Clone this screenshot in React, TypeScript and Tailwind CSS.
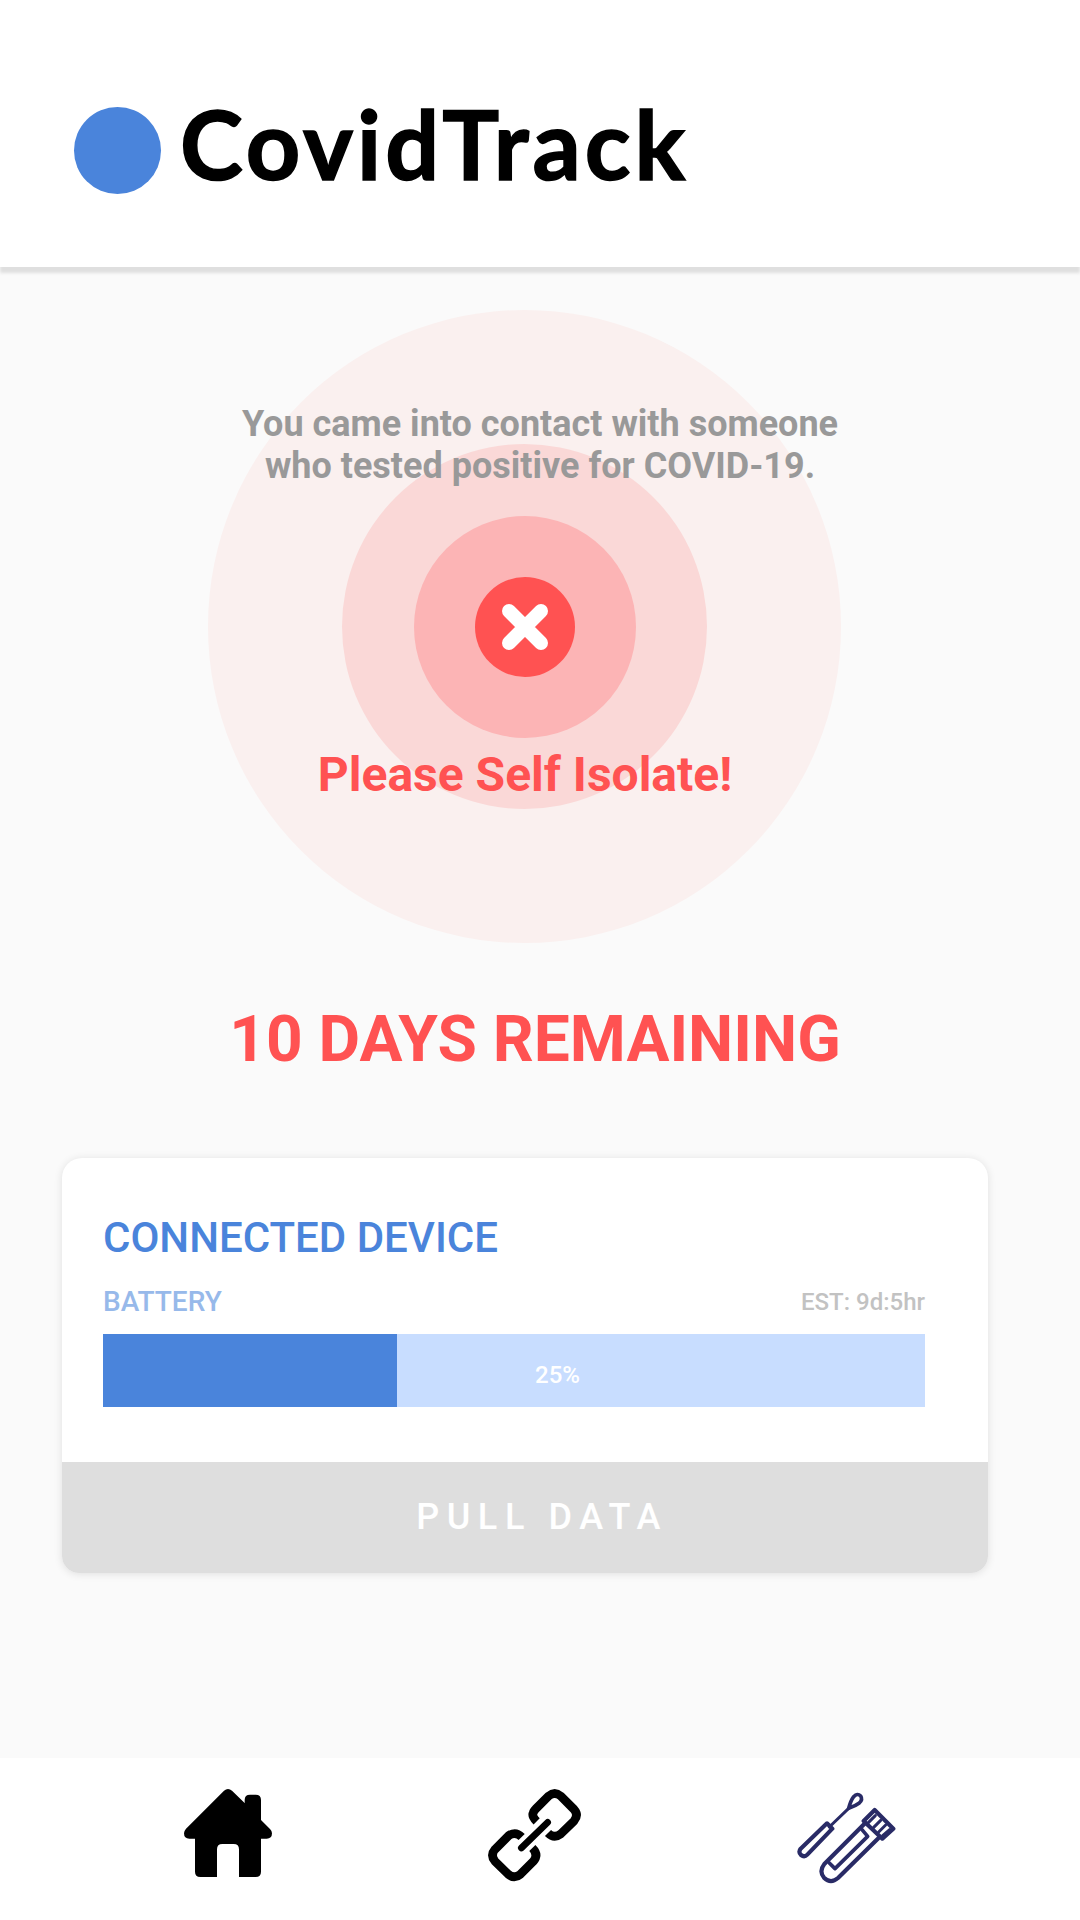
import React from "react";

const BATTERY_FILL = 294;

function HomeIcon() {
  return (
    <svg className="h-[88px] w-[88px]" viewBox="42 116 264 264" fill="#000">
      <path d="M162 121Q174 111 186 121L224 158V149Q224 133 240 133H257Q273 133 273 149V209L300 236Q306 242 306 249Q306 265 290 265H273V364Q273 380 257 380H207V297Q207 281 191 281H157Q141 281 141 297V380H91Q75 380 75 364V265H58Q42 265 42 249Q42 242 48 235Z" />
    </svg>
  );
}

function LinkIcon() {
  return (
    <svg className="h-[93px] w-[93px]" viewBox="54 116 279 279" fill="none" stroke="#000" strokeWidth="26">
      <path d="M200 213Q184 197 190 187Q190 183 198 175L236 137Q254 122 272 137L312 177Q327 194 312 212L272 251Q252 266 234 248" />
      <path d="M155 260Q137 242 116 256L75 297Q60 315 75 333L115 372Q133 387 151 372L190 333Q207 313 187 293" />
      <path d="M154 293L233 216" strokeWidth="20" strokeLinecap="round" />
    </svg>
  );
}

function SwabIcon() {
  return (
    <svg
      className="h-[92px] w-[99px]"
      viewBox="52 68 297 276"
      fill="none"
      stroke="#292b66"
      strokeWidth="12.5"
      strokeLinejoin="round"
      strokeLinecap="round"
    >
      <path d="M149 173L207 117" strokeWidth="9" />
      <path d="M207 117Q213 94 222 82Q233 70 243 80Q250 91 239 101Q227 110 207 117Z" strokeWidth="11" />
      <path d="M142 162L158 178L83 256Q74 265 64 257Q55 248 63 238Z" />
      <path d="M285 122L341 178L308 208L252 155Z" />
      <path d="M287 139L266 160M303 153L282 174M318 167L297 188M330 181L309 199" strokeWidth="9" />
      <path d="M256 162L134 284Q117 306 133 325Q153 345 175 326L296 207" />
      <path d="M247 181L264 201L166 298L149 281" strokeWidth="11" />
    </svg>
  );
}

function Header() {
  return (
    <header className="relative z-10 flex h-[267px] items-start bg-white pl-[74px] pt-[107px] shadow-[0_6px_3px_0px_#dfdfdf]">
      <div className="h-[87px] w-[87px] rounded-full bg-[#4a84db]" />
      <h1 className="-mt-[21px] ml-[19px] whitespace-nowrap font-['Lato',sans-serif] text-[95px] font-bold leading-[114px] tracking-[4px] text-black [-webkit-text-stroke:1.5px_#000]">
        CovidTrack
      </h1>
    </header>
  );
}

function StatusHero() {
  return (
    <section className="relative ml-[208px] mt-[43px] flex h-[633px] w-[633px] flex-col items-center rounded-full bg-[#faf0ef] pt-[93px]">
      <div className="absolute left-[134px] top-[134px] h-[365px] w-[365px] rounded-full bg-[#fad8d7]" />
      <div className="absolute left-[206px] top-[206px] h-[222px] w-[222px] rounded-full bg-[#fcb4b5]" />
      <p className="relative whitespace-nowrap pl-[31px] text-center text-[36px] font-bold leading-[42px] text-[#999]">
        You came into contact with someone
        <br />
        who tested positive for COVID-19.
      </p>
      <div className="relative mt-[90px] flex h-[100px] w-[100px] items-center justify-center rounded-full bg-[#ff5252]">
        <svg className="h-[46px] w-[46px]" viewBox="0 0 46 46" stroke="#fff" strokeWidth="14" strokeLinecap="round">
          <path d="M7 7L39 39M39 7L7 39" />
        </svg>
      </div>
      <p className="relative mt-[70px] whitespace-nowrap pl-px text-[48px] font-bold leading-[56px] text-[#ff5252]">
        Please Self Isolate!
      </p>
    </section>
  );
}

function DeviceCard() {
  return (
    <section className="ml-[62px] mt-[81px] flex h-[415px] w-[926px] flex-col overflow-hidden rounded-b-[17px] rounded-t-[20px] bg-white shadow-[0_1px_8px_rgba(0,0,0,0.11)]">
      <div className="h-[304px] pl-[41px] pr-[63px] pt-[55px] font-medium">
        <h2 className="text-[42px] leading-[49px] text-[#4a84db]">CONNECTED DEVICE</h2>
        <div className="mt-[23px] flex h-[33px] justify-between">
          <span className="text-[28px] leading-[33px] text-[#97b9ea]">BATTERY</span>
          <span className="text-[24px] leading-[34px] text-[#c2c2c2]">EST: 9d:5hr</span>
        </div>
        <div className="mt-[16px] flex h-[73px] bg-[#c8ddff]">
          <div className="h-full bg-[#4a84db]" style={{ width: BATTERY_FILL }} />
          <span className="ml-[138px] mt-[27px] text-[24px] leading-[28px] text-white">25%</span>
        </div>
      </div>
      <button className="flex h-[111px] w-full items-center justify-center bg-[#dedede] pb-[2px] pl-[34px] text-[36px] font-medium leading-[42px] tracking-[7.6px] text-white">
        PULL DATA
      </button>
    </section>
  );
}

function NavBar() {
  return (
    <nav className="flex h-[162px] items-start bg-white pl-[184px] pt-[31px]">
      <HomeIcon />
      <div className="ml-[216px]">
        <LinkIcon />
      </div>
      <div className="ml-[216px] mt-[3px]">
        <SwabIcon />
      </div>
    </nav>
  );
}

export default function App() {
  return (
    <div className="flex h-[1920px] w-[1080px] flex-col overflow-hidden bg-[#fafafa] font-['Roboto',sans-serif]">
      <Header />
      <main className="h-[1491px]">
        <StatusHero />
        <p className="mt-[59px] whitespace-nowrap pr-[10px] text-center text-[64px] font-bold leading-[75px] text-[#ff5252]">
          10 DAYS REMAINING
        </p>
        <DeviceCard />
      </main>
      <NavBar />
    </div>
  );
}
